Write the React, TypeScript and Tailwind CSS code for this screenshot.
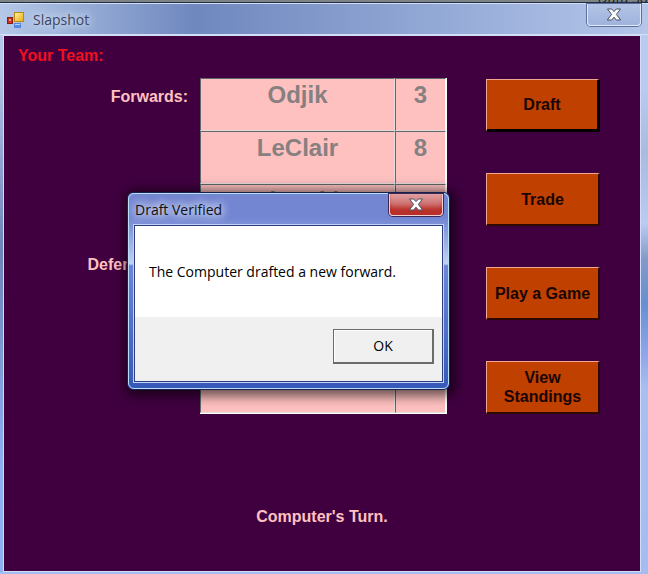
import { useId } from "react"
import clsx from "clsx"

const forwards = [
  { name: "Odjik", rating: "3" },
  { name: "LeClair", rating: "8" },
  { name: "Zelepukin", rating: "4" },
]

const defensemen = [
  { name: "", rating: "" },
  { name: "", rating: "" },
  { name: "", rating: "" },
]

const actions = [
  { label: "Draft", focused: true },
  { label: "Trade", focused: false },
  { label: "Play a Game", focused: false },
  { label: "View Standings", focused: false },
]

interface Player {
  name: string
  rating: string
}

function CloseGlyph() {
  return (
    <svg width="16" height="13" viewBox="0 0 16 13" aria-hidden="true">
      <path
        d="M1.5 1h4.2L8 3.6 10.3 1h4.2l-4.1 5.4 4.3 5.6h-4.4L8 9.2 5.7 12H1.3l4.3-5.6z"
        fill="#fff"
        stroke="#4a4f62"
        strokeWidth="1"
        strokeLinejoin="round"
      />
    </svg>
  )
}

function AppIcon() {
  return (
    <svg width="18" height="18" viewBox="0 0 18 18" aria-hidden="true">
      <defs>
        <linearGradient id="gold" x1="0" y1="0" x2="1" y2="1">
          <stop offset="0" stopColor="#fff3a0" />
          <stop offset="1" stopColor="#e8ab10" />
        </linearGradient>
      </defs>
      <rect x="0.5" y="6.5" width="5" height="6" fill="#c9341f" stroke="#8a1d14" />
      <rect x="2" y="8" width="2" height="2" fill="#f09080" />
      <rect x="7.5" y="1.5" width="9" height="9" fill="url(#gold)" stroke="#b98a18" />
      <rect x="7.5" y="12.5" width="6" height="4" fill="#4b8df0" stroke="#5a86d8" />
      <path d="M8 13.5h5" stroke="#b5d5ff" />
    </svg>
  )
}

function PlayerTable({ label, players }: { label: string; players: Player[] }) {
  const id = useId()
  return (
    <section className="flex gap-3 last:flex-1">
      <h2 id={id} className="flex-1 pt-2 text-right text-base leading-[22px] font-bold text-[#ffc0c0]">
        {label}
      </h2>
      <table
        aria-labelledby={id}
        className="w-[247px] table-fixed border-separate border-spacing-0 border-r border-b border-white bg-[#ffc0c0]"
      >
        <tbody>
          {players.map((p, i) => (
            <tr key={i} className="h-[53px] align-top text-center text-2xl font-bold text-[#868080]">
              <td className="w-[195px] border border-t-[#606868] border-r-[#e4dcdc] border-b-[#e4dcdc] border-l-[#606868] p-0">
                {p.name}
              </td>
              <td className="border border-t-[#606868] border-r-white border-b-[#e4dcdc] border-l-[#606868] p-0">
                {p.rating}
              </td>
            </tr>
          ))}
        </tbody>
      </table>
    </section>
  )
}

function MessageDialog() {
  return (
    <div
      role="dialog"
      aria-labelledby="dialog-title"
      className="absolute top-[192px] left-[127px] w-[323px] rounded-md border border-[#17204f] bg-linear-to-b from-[#7486d0] via-[#6c84d8] via-40% to-[#3558b8] shadow-[2px_2px_12px_4px_rgba(0,0,0,0.6)]"
    >
      <div className="rounded-md border border-[#b9e0f8] bg-[linear-gradient(to_bottom,transparent_12%,#c3d2f2_36%,transparent_37%)] px-[5px] pb-[6px]">
        <div className="flex h-[31px] items-start justify-between">
          <h2
            id="dialog-title"
            className="pt-[6px] pl-px text-sm text-[#111] [text-shadow:0_0_8px_#dfe6fb,0_0_8px_#dfe6fb,0_0_12px_#dfe6fb]"
          >
            Draft Verified
          </h2>
          <button
            type="button"
            aria-label="Close"
            className="flex h-[22px] w-[54px] items-center justify-center rounded-b border border-t-0 border-[#f0d0d4] bg-linear-to-b from-[#dfa0a0] via-[#cf7474] via-45% to-[#cf5a50] shadow-[inset_0_-10px_4px_-2px_#b8302a,0_0_0_1px_#3b2a55]"
          >
            <CloseGlyph />
          </button>
        </div>
        <div className="border border-[#2b3f80] bg-[#f0f0f0] shadow-[0_0_0_1px_#c3d2f5]">
          <p className="flex h-[91px] items-center bg-white px-[14px] text-sm text-black">
            The Computer drafted a new forward.
          </p>
          <div className="flex h-16 items-start justify-end px-2 pt-3">
            <button
              type="button"
              className="h-[35px] w-[101px] border border-r-2 border-b-2 border-[#696c69] bg-[#f0f0f0] text-sm text-black shadow-[inset_1px_1px_0_#fff]"
            >
              OK
            </button>
          </div>
        </div>
      </div>
    </div>
  )
}

export default function App() {
  return (
    <div className="relative flex min-h-screen flex-col bg-[#a4bdee] font-['Open_Sans','Noto_Sans',sans-serif]">
      <div className="flex h-[3px] items-end justify-end overflow-hidden border-b border-[#222c44] bg-[#7d8486]">
        <span className="text-sm leading-[8px] text-[#222]">Data So</span>
      </div>
      <header className="flex h-8 items-start justify-between border-y border-[#d5e0f5] bg-linear-to-r from-[#b5c8e8] via-[#6f88be] via-30% to-[#b4c6ea] pr-[7px] pl-[7px]">
        <div className="flex h-full items-center gap-2 pt-px">
          <AppIcon />
          <h1 className="text-sm text-[#3c465c] [text-shadow:0_0_8px_#ccd9f0,0_0_8px_#ccd9f0,0_0_12px_#ccd9f0]">
            Slapshot
          </h1>
        </div>
        <button
          type="button"
          aria-label="Close"
          className="flex h-[22px] w-[54px] items-center justify-center rounded-b border border-t-0 border-[#e0eaff] bg-linear-to-b from-[#b4c4e6] to-[#9fb3dc] shadow-[0_0_0_1px_#5d6f9c]"
        >
          <CloseGlyph />
        </button>
      </header>

      <div className="flex flex-1 pb-[2px]">
        <div className="w-[3px] bg-linear-to-b from-[#b5c8ea] from-5% via-[#6c84b8] via-40% to-[#8cb0f0] to-80%" />
        <main className="flex-1 border border-[#d0dcf8] bg-[#400040] px-[14px] pt-2 font-['Liberation_Sans',Arial,sans-serif]">
          <h2 className="text-base font-bold text-[#f01020]">Your Team:</h2>
          <div className="mt-[10px] flex gap-[39px] pr-[26px]">
            <div className="flex flex-1 flex-col gap-2">
              <PlayerTable label="Forwards:" players={forwards} />
              <PlayerTable label="Defensemen:" players={defensemen} />
            </div>
            <nav className="flex w-[114px] flex-col gap-[41px] pt-px">
              {actions.map((a) => (
                <button
                  key={a.label}
                  type="button"
                  className={clsx(
                    "h-[53px] border border-t-[#f0a890] border-l-[#f0a890] bg-[#c04000] px-1 text-base leading-[19px] font-bold text-[#1a0505]",
                    a.focused
                      ? "border-r-[3px] border-b-[3px] border-r-black border-b-black"
                      : "border-r-2 border-b-2 border-r-[#2c0800] border-b-[#2c0800]",
                  )}
                >
                  {a.label}
                </button>
              ))}
            </nav>
          </div>
          <p role="status" className="mt-[91px] text-center text-base font-bold text-[#ffc0c0]">
            Computer's Turn.
          </p>
        </main>
        <div className="w-[7px] bg-[linear-gradient(to_bottom,#b8cbf0_10%,#a8bcdf_22%,#b8ccf4_35%,#8299c8_42%,#6690d0_50%,#90a8ec_60%,#a8c0f0_66%,#a4bdf0)]" />
      </div>

      <MessageDialog />
    </div>
  )
}
